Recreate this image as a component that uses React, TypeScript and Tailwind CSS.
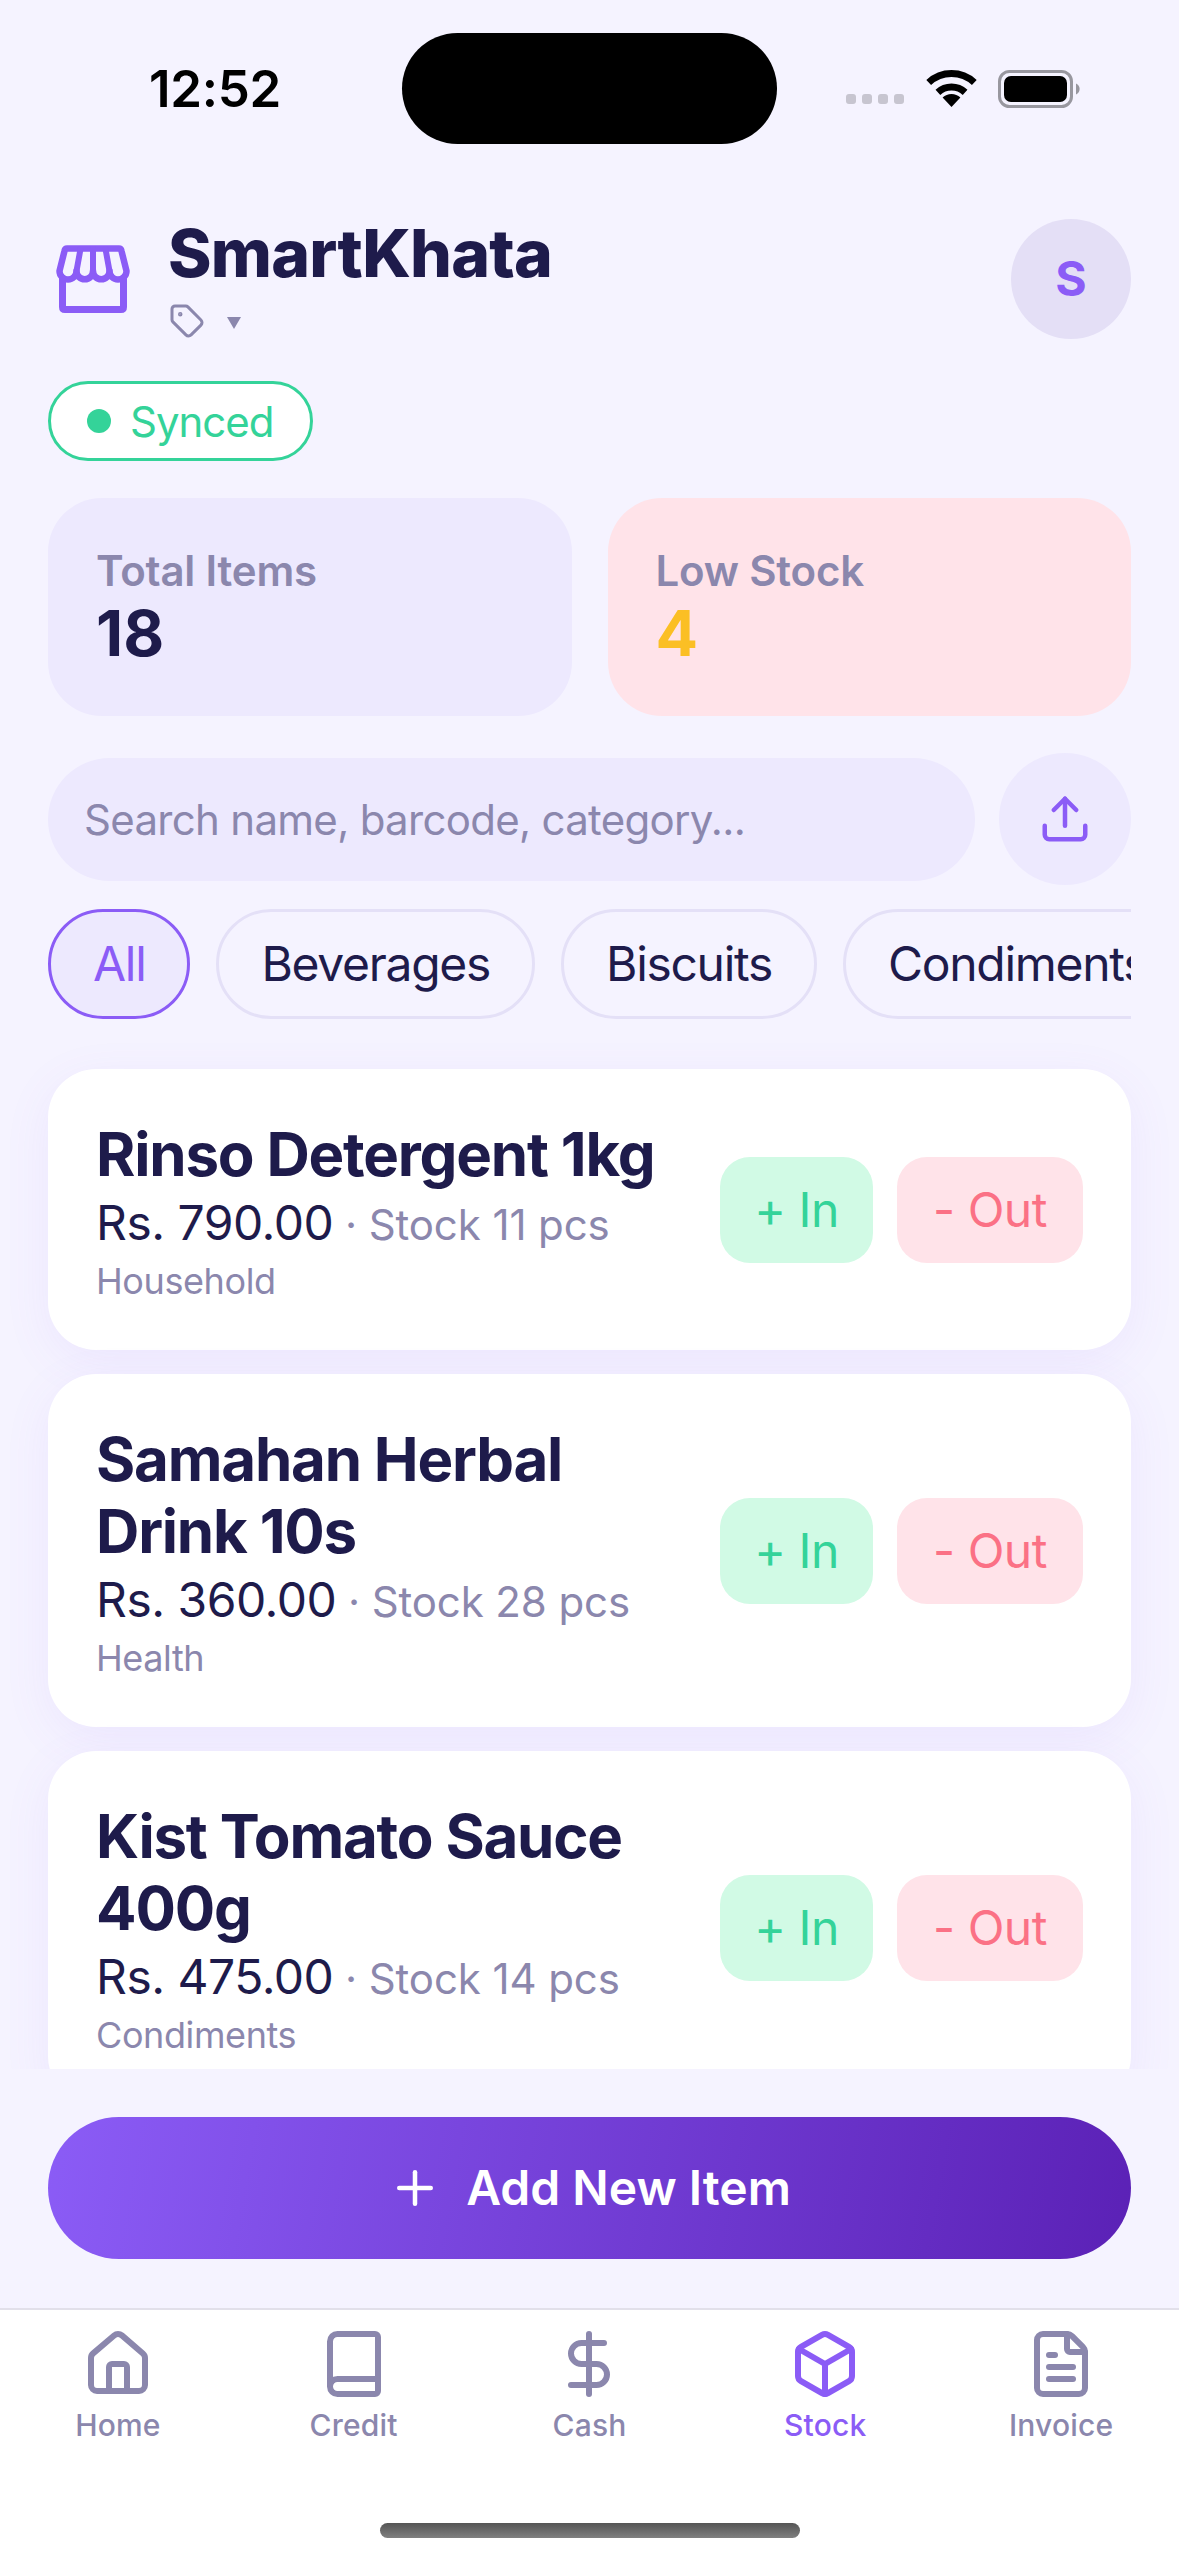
import { House, Book, DollarSign, Box, FileText, Tag, Upload, Plus } from 'lucide-react';

const products = [
  { name: 'Rinso Detergent 1kg', price: 'Rs. 790.00', stock: 'Stock 11 pcs', category: 'Household' },
  { name: 'Samahan Herbal Drink 10s', price: 'Rs. 360.00', stock: 'Stock 28 pcs', category: 'Health' },
  { name: 'Kist Tomato Sauce 400g', price: 'Rs. 475.00', stock: 'Stock 14 pcs', category: 'Condiments' },
];

const categories = ['Beverages', 'Biscuits', 'Condiments'];

const tabs = [
  { label: 'Home', Icon: House },
  { label: 'Credit', Icon: Book },
  { label: 'Cash', Icon: DollarSign },
  { label: 'Stock', Icon: Box, active: true },
  { label: 'Invoice', Icon: FileText },
];

function StatusBar() {
  return (
    <div className="flex items-center h-[111px] mt-[33px] shrink-0">
      <div className="w-[402px] pl-[28px] text-center text-[51px] leading-none font-semibold tracking-[-0.3px] text-black">12:52</div>
      <div className="w-[375px] h-[111px] rounded-full bg-black" />
      <div className="flex items-center ml-[69px]">
        <div className="flex gap-[6px] mt-[20px]">
          <span className="w-[10px] h-[10px] rounded-[3px] bg-[#c7c5d0]" />
          <span className="w-[10px] h-[10px] rounded-[3px] bg-[#c7c5d0]" />
          <span className="w-[10px] h-[10px] rounded-[3px] bg-[#c7c5d0]" />
          <span className="w-[10px] h-[10px] rounded-[3px] bg-[#c7c5d0]" />
        </div>
        <svg width="51" height="37" viewBox="0 0 51 37" className="ml-[22px]">
          <path d="M2.7 12.5A33.5 33.5 0 0 1 48.3 12.5" fill="none" stroke="#000" strokeWidth="7" />
          <path d="M11.9 22.4A20 20 0 0 1 39.1 22.4" fill="none" stroke="#000" strokeWidth="7" />
          <path d="M25.5 37L16.6 27.5A13 13 0 0 1 34.4 27.5Z" fill="#000" />
        </svg>
        <svg width="83" height="38" viewBox="0 0 83 38" className="ml-[21px]">
          <rect x="1.5" y="1.5" width="72" height="35" rx="10" fill="none" stroke="#98979f" strokeWidth="3" />
          <rect x="6" y="6" width="63" height="26" rx="7" fill="#000" />
          <path d="M78 13.5a6 6 0 0 1 0 11z" fill="#98979f" />
        </svg>
      </div>
    </div>
  );
}

function StoreIcon() {
  return (
    <svg width="74" height="68" viewBox="0 0 74 68" fill="none" stroke="#8b5cf6" strokeWidth="7" strokeLinejoin="round" strokeLinecap="round" className="ml-[8px]">
      <path d="M11 3.5H63Q65 3.5 65.5 6L70.5 26A8.5 8.5 0 0 1 53.5 26A8.25 8.25 0 0 1 37 26A8.25 8.25 0 0 1 20.5 26A8.5 8.5 0 0 1 3.5 26L8.5 6Q9 3.5 11 3.5Z" strokeWidth="6.5" />
      <path d="M20.5 26L24.5 4M37 26V4M53.5 26L49.5 4" strokeWidth="6" />
      <path d="M6.5 33V62Q6.5 64.5 9 64.5H65Q67.5 64.5 67.5 62V33" />
    </svg>
  );
}

function ProductCard({ name, price, stock, category }: (typeof products)[number]) {
  return (
    <div className="flex items-center shrink-0 rounded-[48px] bg-white px-[48px] py-[48px] shadow-[0_12px_48px_rgba(139,92,246,0.08)]">
      <div className="flex-1 min-w-0 -mb-[4px]">
        <div className="mt-[1px] text-[60px] leading-[72px] font-bold tracking-[-1.2px] text-[#1e1b4b]">{name}</div>
        <div className="text-[48px] leading-[66px] tracking-[-0.5px] text-[#1e1b4b]">
          {price}
          <span className="text-[42px] leading-[40px] tracking-[-0.1px] text-[#8b87ad]"> · {stock}</span>
        </div>
        <div className="text-[36px] leading-[50px] tracking-[-0.4px] text-[#8b87ad]">{category}</div>
      </div>
      <div className="flex gap-[24px] ml-[36px] shrink-0">
        <button className="w-[153px] h-[106px] rounded-[30px] bg-[#d1fae5] text-[48px] tracking-[-0.5px] text-[#34d399]">+ In</button>
        <button className="w-[186px] h-[106px] rounded-[30px] bg-[#ffe3e9] text-[48px] tracking-[-0.5px] text-[#fb7185]">- Out</button>
      </div>
    </div>
  );
}

export default function App() {
  return (
    <div className="w-[1179px] h-[2556px] flex flex-col overflow-hidden bg-[#f5f3ff] font-['Inter',sans-serif]">
      <StatusBar />

      <div className="flex justify-between items-center mt-[75px] px-[48px] shrink-0">
        <div className="flex items-center">
          <StoreIcon />
          <div className="ml-[38px]">
            <div className="-mt-[2px] text-[66px] leading-[72px] font-extrabold tracking-[-0.8px] text-[#1e1b4b]">SmartKhata</div>
            <div className="flex items-center mt-[14px]">
              <Tag size={36} strokeWidth={2} className="ml-[1px] text-[#8b87ad]" />
              <span className="ml-[22px] mt-[3px] w-0 h-0 border-x-[7px] border-x-transparent border-t-[12px] border-t-[#8b87ad]" />
            </div>
          </div>
        </div>
        <div className="w-[120px] h-[120px] rounded-full bg-[#e4dff6] flex items-center justify-center text-[48px] font-bold text-[#8b5cf6]">S</div>
      </div>

      <div className="mt-[42px] px-[48px] shrink-0">
        <div className="inline-flex items-center h-[80px] w-[265px] rounded-full border-[3px] border-[#34d399] bg-white pl-[36px]">
          <span className="w-[24px] h-[24px] rounded-full bg-[#34d399]" />
          <span className="ml-[19px] text-[42px] tracking-[-1px] text-[#34d399]">Synced</span>
        </div>
      </div>

      <div className="grid grid-cols-2 gap-[36px] mt-[37px] px-[48px] shrink-0">
        <div className="h-[218px] rounded-[54px] bg-[#ede9fe] px-[48px] pt-[46px]">
          <div className="text-[42px] leading-[54px] font-semibold tracking-[-0.2px] text-[#8b87ad]">Total Items</div>
          <div className="text-[63px] leading-[70px] font-bold text-[#1e1b4b]">18</div>
        </div>
        <div className="h-[218px] rounded-[54px] bg-[#ffe3e9] px-[48px] pt-[46px]">
          <div className="text-[42px] leading-[54px] font-semibold tracking-[-0.2px] text-[#8b87ad]">Low Stock</div>
          <div className="text-[63px] leading-[70px] font-bold text-[#fbbf24]">4</div>
        </div>
      </div>

      <div className="flex items-center gap-[24px] mt-[37px] px-[48px] shrink-0">
        <div className="flex-1 h-[123px] rounded-full bg-[#ede9fe] flex items-center pl-[36px] text-[42px] tracking-[-0.7px] text-[#8b87ad]">
          Search name, barcode, category...
        </div>
        <div className="w-[132px] h-[132px] rounded-full bg-[#ede9fe] flex items-center justify-center">
          <Upload size={54} strokeWidth={2} className="text-[#8b5cf6]" />
        </div>
      </div>

      <div className="mx-[48px] mt-[24px] flex gap-[26px] overflow-hidden shrink-0">
        <div className="h-[110px] px-[42px] rounded-full border-[3px] border-[#8b5cf6] bg-[#ede9fe] flex items-center text-[48px] tracking-[-1.3px] text-[#8b5cf6] shrink-0">All</div>
        {categories.map((c) => (
          <div key={c} className="h-[110px] px-[42px] rounded-full border-[3px] border-[#e4e0f7] flex items-center text-[48px] tracking-[-1.3px] text-[#1e1b4b] shrink-0">{c}</div>
        ))}
      </div>

      {/* Product list, cut off by the footer */}
      <div className="flex-1 min-h-0 mt-[24px] pt-[26px] px-[48px] flex flex-col gap-[24px] overflow-hidden">
        {products.map((p) => (
          <ProductCard key={p.name} {...p} />
        ))}
      </div>

      <div className="px-[48px] pt-[48px] pb-[49px] shrink-0">
        <button className="w-full h-[142px] rounded-full bg-[linear-gradient(100deg,#8b5cf6,#5b21b6)] flex items-center justify-center text-[48px] font-semibold text-white">
          <Plus size={54} strokeWidth={2} className="mr-[24px]" />
          Add New Item
        </button>
      </div>

      <div className="h-[248px] shrink-0 border-t-[2px] border-[#e2e0ea] bg-white flex flex-col items-center">
        <div className="w-full grid grid-cols-5 pt-[18px]">
          {tabs.map(({ label, Icon, active }) => (
            <div key={label} className={`flex flex-col items-center ${active ? 'text-[#8b5cf6]' : 'text-[#8b87ad]'}`}>
              <Icon size={72} strokeWidth={2} />
              <span className="mt-[5px] text-[30px] leading-[40px] font-medium tracking-[0.2px]">{label}</span>
            </div>
          ))}
        </div>
        <div className="mt-[78px] w-[420px] h-[15px] rounded-full bg-gradient-to-b from-[#555555] to-[#808080]" />
      </div>
    </div>
  );
}
